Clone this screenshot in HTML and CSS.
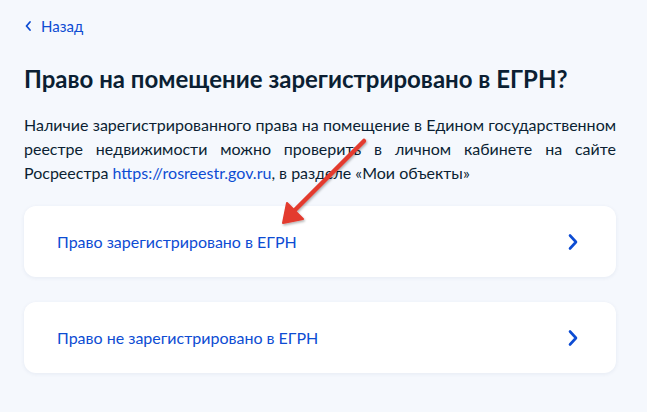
FILE: index.html
```html
<!DOCTYPE html>
<html lang="ru">
<head>
<meta charset="utf-8">
<title>Право на помещение</title>
<link rel="stylesheet" href="styles.css">
</head>
<body>
<div class="page">
  <a class="back" href="#">
    <svg class="back-icon" width="8" height="12" viewBox="0 0 8 12"><path d="M6 2 L2.5 6 L6 10" fill="none" stroke="#0d4cd3" stroke-width="1.8" stroke-linecap="round" stroke-linejoin="round"/></svg>
    <span>Назад</span>
  </a>
  <h1 class="title">Право на помещение зарегистрировано в ЕГРН?</h1>
  <p class="text">Наличие зарегистрированного права на помещение в Едином государственном реестре недвижимости можно проверить в личном кабинете на сайте Росреестра <a class="link" href="#">https://rosreestr.gov.ru</a>, в разделе «Мои объекты»</p>
  <div class="options">
    <a class="card" href="#">
      <span class="card-text">Право зарегистрировано в ЕГРН</span>
      <svg class="chev" width="12" height="18" viewBox="0 0 12 18"><path d="M3 2.5 L9 9 L3 15.5" fill="none" stroke="#0d4cd3" stroke-width="2.6" stroke-linecap="round" stroke-linejoin="round"/></svg>
    </a>
    <a class="card" href="#">
      <span class="card-text">Право не зарегистрировано в ЕГРН</span>
      <svg class="chev" width="12" height="18" viewBox="0 0 12 18"><path d="M3 2.5 L9 9 L3 15.5" fill="none" stroke="#0d4cd3" stroke-width="2.6" stroke-linecap="round" stroke-linejoin="round"/></svg>
    </a>
  </div>
  <svg class="pointer" width="647" height="412" viewBox="0 0 647 412">
    <defs>
      <filter id="sh" x="-20%" y="-20%" width="140%" height="140%">
        <feDropShadow dx="1" dy="1.5" stdDeviation="1.2" flood-color="#000" flood-opacity="0.3"/>
      </filter>
    </defs>
    <g filter="url(#sh)">
      <line x1="364" y1="141" x2="294" y2="211" stroke="#e33b2e" stroke-width="4.5" stroke-linecap="round"/>
      <polygon points="283,223 287,203 303,219" fill="#e33b2e" stroke="#e33b2e" stroke-width="2" stroke-linejoin="round"/>
    </g>
  </svg>
</div>
</body>
</html>
```
FILE: styles.css
```css
html, body {
  margin: 0;
  padding: 0;
}
body {
  background: #f5f8fd;
  font-family: Lato, "Noto Sans", sans-serif;
  color: #0b1f33;
}
.page {
  position: relative;
  width: 647px;
  height: 412px;
  box-sizing: border-box;
  padding: 15px 31px 0 24px;
  overflow: hidden;
}
.back {
  display: flex;
  align-items: center;
  gap: 9px;
  color: #0d4cd3;
  text-decoration: none;
  font-size: 15px;
  line-height: 22px;
}
.back-icon {
  display: block;
}
.title {
  margin: 27px 0 0;
  font-size: 24px;
  line-height: 30px;
  font-weight: 700;
  letter-spacing: 0;
}
.text {
  margin: 19px 0 0;
  font-size: 16px;
  line-height: 24px;
  text-align: justify;
}
.link {
  color: #0d4cd3;
  text-decoration: none;
}
.options {
  display: flex;
  flex-direction: column;
  gap: 25px;
  margin-top: 21px;
}
.card {
  display: flex;
  align-items: center;
  justify-content: space-between;
  height: 71px;
  box-sizing: border-box;
  padding: 0 37px 0 33px;
  background: #fff;
  border-radius: 12px;
  box-shadow: 0 1px 4px rgba(30, 60, 120, 0.07);
  text-decoration: none;
  color: #0d4cd3;
  font-size: 16px;
}
.chev {
  display: block;
}
.pointer {
  position: absolute;
  left: 0;
  top: 0;
  pointer-events: none;
}
```
